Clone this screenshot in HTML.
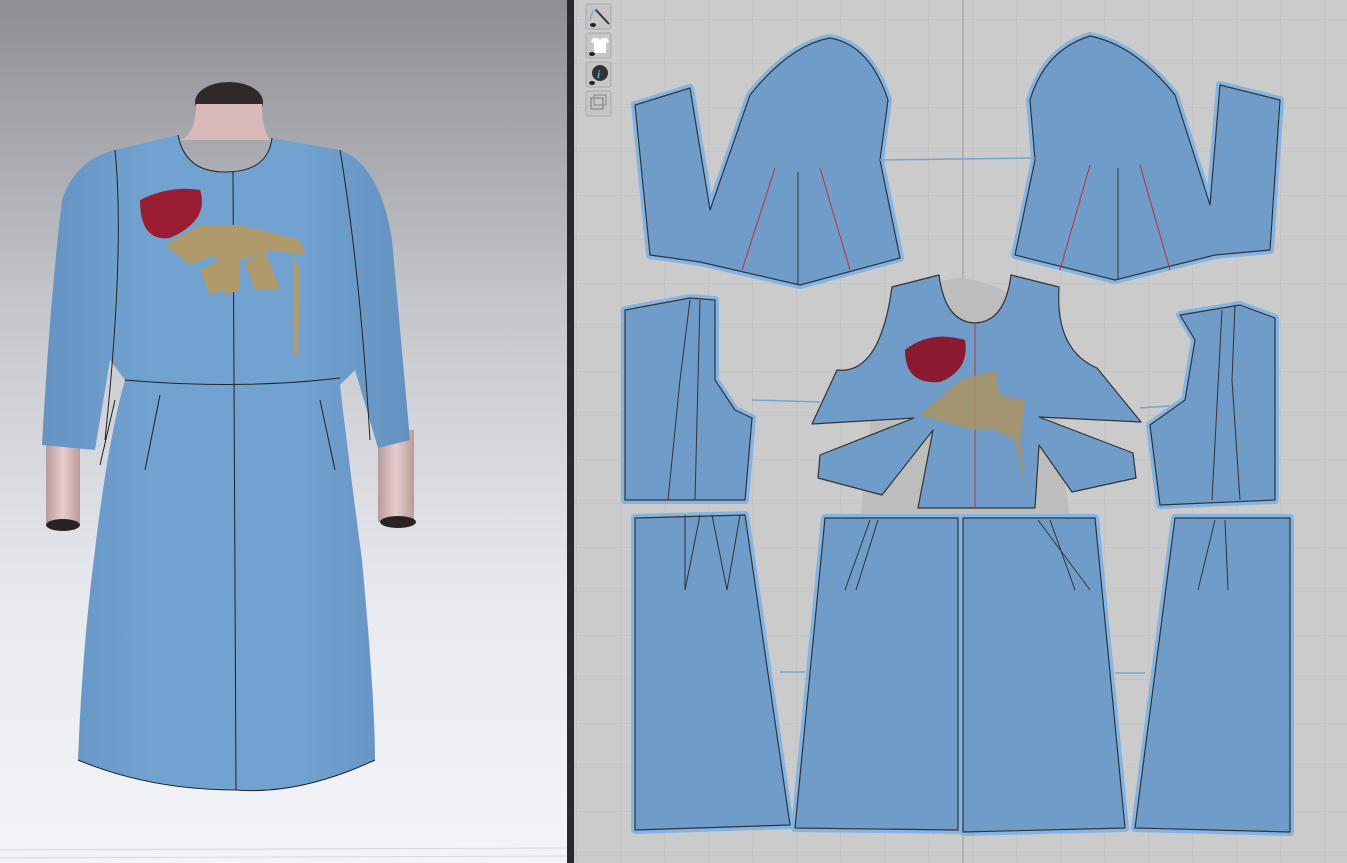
<!DOCTYPE html>
<html><head><style>
html,body{margin:0;padding:0;width:1347px;height:863px;overflow:hidden;background:#ccc}
svg{display:block}
</style></head><body>
<svg width="1347" height="863" viewBox="0 0 1347 863" xmlns="http://www.w3.org/2000/svg">
<defs>
<linearGradient id="bg" x1="0" y1="0" x2="0" y2="1">
<stop offset="0" stop-color="#8d8f94"/><stop offset="0.35" stop-color="#c4c6cb"/><stop offset="0.7" stop-color="#e9eaef"/><stop offset="1" stop-color="#f3f4f8"/>
</linearGradient>
<linearGradient id="arm" x1="0" y1="0" x2="1" y2="0">
<stop offset="0" stop-color="#b89c9c"/><stop offset="0.5" stop-color="#e6cccb"/><stop offset="1" stop-color="#b89c9c"/>
</linearGradient>
<linearGradient id="dr" x1="0" y1="0" x2="1" y2="0">
<stop offset="0" stop-color="#6594c4"/><stop offset="0.3" stop-color="#72a2d0"/><stop offset="0.7" stop-color="#72a2d0"/><stop offset="1" stop-color="#6391c0"/>
</linearGradient>
<pattern id="grid" width="44" height="44" patternUnits="userSpaceOnUse" x="577" y="20">
<path d="M44 0V44H0" fill="none" stroke="#bdbdbd" stroke-width="1"/>
</pattern>
</defs>
<rect x="0" y="0" width="567" height="863" fill="url(#bg)"/>
<g stroke="#d8d8dc" stroke-width="1"><line x1="0" y1="850" x2="567" y2="848"/><line x1="0" y1="858" x2="567" y2="856"/></g>
<rect x="567" y="0" width="7" height="863" fill="#2a2a2a"/>
<rect x="574" y="0" width="773" height="863" fill="#cbcbcb"/>
<rect x="574" y="0" width="773" height="863" fill="url(#grid)"/>
<line x1="963" y1="0" x2="963" y2="863" stroke="#9a9a9a"/>
<g fill="#c6c6c6" stroke="#a8a8a8">
<rect x="586" y="4" width="25" height="25" rx="2"/><rect x="586" y="33" width="25" height="25" rx="2"/>
<rect x="586" y="62" width="25" height="25" rx="2"/><rect x="586" y="91" width="25" height="25" rx="2"/>
</g>
<path d="M590 20 Q592 10 597 9" stroke="#5aa0e0" fill="none"/>
<line x1="596" y1="10" x2="609" y2="24" stroke="#333" stroke-width="2"/>
<ellipse cx="593" cy="25" rx="3" ry="2" fill="#222"/>
<path d="M593 38h5l2 2 2-2h5l2 4-3 1v10h-12v-10l-3-1z" fill="#fff"/>
<ellipse cx="592" cy="54" rx="3" ry="2" fill="#222"/>
<circle cx="600" cy="73" r="8" fill="#333"/><text x="597" y="78" font-family="Liberation Serif" font-style="italic" font-weight="bold" font-size="12" fill="#29b6e8">i</text>
<ellipse cx="592" cy="83" rx="3" ry="2" fill="#222"/>
<rect x="591" y="98" width="12" height="11" fill="none" stroke="#777"/><rect x="594" y="95" width="12" height="10" fill="none" stroke="#888"/>
<path d="M880 330 Q900 285 960 278 Q1020 285 1045 330 L1070 520 L860 520Z" fill="#bdbdbd"/>
<g fill="#6f9cc8" stroke="#333" stroke-width="1.2" stroke-linejoin="round">
<g stroke="#84b4e4" stroke-width="8" fill="none">
<path d="M635 105 L690 88 L710 210 L750 95 Q790 45 830 38 Q870 45 888 100 L880 160 L900 258 L800 285 L700 262 L650 255Z"/>
<path d="M1280 100 L1220 85 L1210 205 L1175 95 Q1135 45 1090 36 Q1045 50 1030 100 L1035 160 L1015 255 L1115 280 L1215 255 L1270 250Z"/>
<path d="M625 310 L690 298 L715 300 L715 380 L735 410 L752 418 L745 500 L625 500Z"/>
<path d="M1180 315 L1240 305 L1275 318 L1275 500 L1160 505 L1150 425 L1185 400 L1195 340Z"/>
<path d="M635 518 L745 515 L790 825 L635 830Z"/><path d="M825 518 L958 518 L958 830 L795 828Z"/>
<path d="M963 518 L1095 518 L1125 828 L963 832Z"/><path d="M1175 518 L1290 518 L1290 832 L1135 828Z"/>
</g>
<path d="M635 105 L690 88 L710 210 L750 95 Q790 45 830 38 Q870 45 888 100 L880 160 L900 258 L800 285 L700 262 L650 255Z"/>
<path d="M1280 100 L1220 85 L1210 205 L1175 95 Q1135 45 1090 36 Q1045 50 1030 100 L1035 160 L1015 255 L1115 280 L1215 255 L1270 250Z"/>
<path d="M625 310 L690 298 L715 300 L715 380 L735 410 L752 418 L745 500 L625 500Z"/>
<path d="M1180 315 L1240 305 L1275 318 L1275 500 L1160 505 L1150 425 L1185 400 L1195 340Z"/>
<path d="M892 287 L939 275 Q945 322 975 323 Q1005 322 1011 275 L1059 287 Q1055 350 1097 368 L1141 422 L1039 417 L1133 453 L1136 478 L1072 492 L1039 445 L1035 508 L918 508 L933 430 L882 495 L818 478 L820 455 L914 418 L812 424 L837 370 Q880 375 892 287Z"/>
<path d="M635 518 L745 515 L790 825 L635 830Z"/><path d="M825 518 L958 518 L958 830 L795 828Z"/>
<path d="M963 518 L1095 518 L1125 828 L963 832Z"/><path d="M1175 518 L1290 518 L1290 832 L1135 828Z"/>
</g>
<g stroke="#333" stroke-width="1" fill="none">
<path d="M798 172 L798 285 M1118 168 L1118 280 M685 515 L685 590 L700 515 M712 515 L727 590 L740 515 M845 590 L870 520 M878 520 L856 590 M1050 520 L1075 590 M1038 520 L1090 590 M1198 590 L1215 520 M1225 520 L1228 590 M690 300 L680 380 L668 500 M700 300 L695 500 M1235 305 L1232 380 L1240 500 M1222 310 L1212 500"/>
</g>
<g stroke="#c03030" stroke-width="1" fill="none"><path d="M742 270 L775 168 M850 270 L820 168 M1060 270 L1090 165 M1170 270 L1140 165 M975 323 L975 508"/></g>
<g stroke="#7aa4cc" stroke-width="1.5"><line x1="880" y1="160" x2="1035" y2="158"/><line x1="752" y1="400" x2="820" y2="402"/><line x1="1140" y1="408" x2="1170" y2="406"/><line x1="780" y1="672" x2="805" y2="672"/><line x1="1115" y1="673" x2="1145" y2="673"/></g>
<path d="M905 350 Q930 330 965 340 Q970 370 940 382 Q905 385 905 350Z" fill="#8a1a30"/>
<path d="M920 415 L960 380 L995 370 L1000 395 L1025 400 L1020 440 L1025 490 L1015 440 L995 430 L975 430 L955 425 Z" fill="#a89468" opacity="0.9"/>
<!-- dress left -->
<ellipse cx="229" cy="102" rx="34" ry="20" fill="#2f2a29"/>
<path d="M196 104 Q196 135 180 140 L270 140 Q262 130 262 104Z" fill="#d8b9b8"/>
<rect x="46" y="430" width="34" height="95" fill="url(#arm)"/><ellipse cx="63" cy="525" rx="17" ry="6" fill="#2a2222"/>
<rect x="378" y="430" width="36" height="92" fill="url(#arm)"/><ellipse cx="398" cy="522" rx="18" ry="6" fill="#2a2222"/>
<path d="M115 150 L178 135 Q185 172 225 172 Q268 172 272 138 L340 150 Q380 165 392 240 L410 440 L378 448 L355 370 L340 385 Q350 470 362 560 Q375 700 375 760 Q300 795 236 790 Q150 790 78 760 Q82 650 95 550 Q108 440 125 380 L110 360 L95 450 L42 445 Q50 300 62 200 Q75 160 115 150Z" fill="url(#dr)"/>
<g stroke="#222" stroke-width="1" fill="none">
<path d="M178 135 Q185 172 225 172 Q268 172 272 138"/>
<path d="M233 172 L236 790 M125 380 Q240 390 340 378 M115 150 Q125 250 105 440 M340 150 Q360 270 370 440 M160 395 L145 470 M115 400 L100 465 M320 400 L335 470"/>
<path d="M78 760 Q150 790 236 790 Q300 795 375 760"/>
</g>
<path d="M140 200 Q170 185 200 190 Q210 220 170 238 Q140 242 140 200Z" fill="#9a1c32"/>
<g fill="#b09a6c">
<path d="M165 245 L200 225 L240 225 L300 240 L305 255 L270 250 L240 260 L240 290 L225 295 L215 255 L190 265 Z"/>
<path d="M200 270 L230 255 L225 290 L210 295Z"/><path d="M245 262 L265 250 L280 290 L255 290Z"/>
<path d="M293 255 L300 270 L298 355 L293 355Z"/>
</g>
</svg>
</body></html>
